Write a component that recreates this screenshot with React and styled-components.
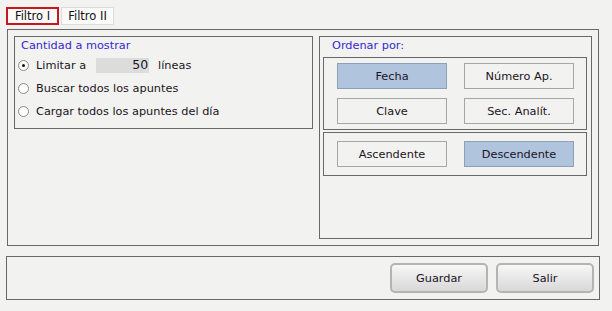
import React from 'react';
import styled, { createGlobalStyle } from 'styled-components';

const GlobalStyle = createGlobalStyle`
  html, body {
    margin: 0;
    padding: 0;
    background: #f2f2f0;
  }
  body {
    font-family: "DejaVu Sans", Verdana, sans-serif;
    font-size: 11.3px;
    color: #1b1424;
  }
`;

const Page = styled.div`
  width: 612px;
  height: 311px;
  padding: 7px 0 0 6px;
  box-sizing: border-box;
`;

const TabBar = styled.div`
  display: flex;
  gap: 2px;
  height: 18px;
`;

const Tab = styled.div`
  display: flex;
  align-items: center;
  justify-content: center;
  box-sizing: border-box;
  width: 53px;
  height: 18px;
  background: #fbfbfb;
  border: ${p => (p.active ? '2px solid #c8161d' : '1px solid #dcdcdc')};
  font-size: 11.5px;
  color: #111;
`;

const MainPanel = styled.div`
  margin: 4px 0 0 1px;
  width: 592px;
  height: 217px;
  box-sizing: border-box;
  border: 1px solid #686868;
  padding: 6px 6px 7px 6px;
  display: grid;
  grid-template-columns: 299px 273px;
  column-gap: 6px;
  align-items: start;
`;

const GroupBox = styled.div`
  box-sizing: border-box;
  border: 1px solid #686868;
  height: ${p => p.h}px;
  display: flex;
  flex-direction: column;
`;

const GroupTitle = styled.div`
  color: #3528cf;
  line-height: 14px;
  padding: ${p => p.pad};
`;

const RadioList = styled.div`
  display: flex;
  flex-direction: column;
  padding: 1px 0 0 3px;
`;

const RadioRow = styled.div`
  display: flex;
  align-items: center;
  height: 23px;
`;

const RadioDot = styled.span`
  width: 11px;
  height: 11px;
  border-radius: 50%;
  box-sizing: border-box;
  border: 1px solid #8d8d8d;
  background: radial-gradient(circle at 60% 60%, #ffffff 55%, #e3e3e3 100%);
  margin-right: 7px;
  position: relative;
  flex: none;
  &::after {
    content: '';
    display: ${p => (p.checked ? 'block' : 'none')};
    position: absolute;
    left: 3px;
    top: 3px;
    width: 3px;
    height: 3px;
    border-radius: 50%;
    background: #111;
  }
`;

const NumberInput = styled.div`
  width: 53px;
  height: 15px;
  background: #dcdcdc;
  margin: 0 9px 0 10px;
  text-align: right;
  font-size: 12.5px;
  line-height: 13px;
  padding-right: 1px;
  box-sizing: border-box;
`;

const InnerBox = styled.div`
  box-sizing: border-box;
  border: 1px solid #686868;
  margin: ${p => p.m};
  padding: ${p => p.pad};
  display: grid;
  grid-template-columns: 110px 110px;
  column-gap: 17px;
  row-gap: 9px;
`;

const ToggleButton = styled.div`
  box-sizing: border-box;
  height: 26px;
  display: flex;
  align-items: center;
  justify-content: center;
  border: 1px solid ${p => (p.selected ? '#8f9fb7' : '#a6a6a6')};
  background: ${p => (p.selected ? '#b0c4de' : '#f2f2f0')};
  color: #1b1424;
`;

const BottomPanel = styled.div`
  margin-top: 10px;
  width: 594px;
  height: 44px;
  box-sizing: border-box;
  border: 1px solid #686868;
  display: flex;
  justify-content: flex-end;
  align-items: flex-start;
  gap: 8px;
  padding: 6px 5px 0 0;
`;

const ActionButton = styled.button`
  width: 98px;
  height: 30px;
  box-sizing: border-box;
  border: 2px solid #b4b4b4;
  border-radius: 5px;
  background: linear-gradient(#f7f7f7, #d8d8d8);
  font-family: "DejaVu Sans", Verdana, sans-serif;
  font-size: 11.3px;
  color: #1b1424;
  padding: 0;
`;

const radios = [
  { label: 'Limitar a', checked: true, limit: true },
  { label: 'Buscar todos los apuntes' },
  { label: 'Cargar todos los apuntes del día' }
];

export default function App() {
  return (
    <>
      <GlobalStyle />
      <Page>
        <TabBar>
          <Tab active>Filtro I</Tab>
          <Tab>Filtro II</Tab>
        </TabBar>
        <MainPanel>
          <GroupBox h={93}>
            <GroupTitle pad="2px 0 0 6px">Cantidad a mostrar</GroupTitle>
            <RadioList>
              {radios.map(r => (
                <RadioRow key={r.label}>
                  <RadioDot checked={r.checked} />
                  {r.label}
                  {r.limit && (
                    <>
                      <NumberInput>50</NumberInput>
                      líneas
                    </>
                  )}
                </RadioRow>
              ))}
            </RadioList>
          </GroupBox>
          <GroupBox h={203}>
            <GroupTitle pad="2px 0 4px 12px">Ordenar por:</GroupTitle>
            <InnerBox m="0 4px 0 3px" pad="5px 12px 5px 13px">
              <ToggleButton selected>Fecha</ToggleButton>
              <ToggleButton>Número Ap.</ToggleButton>
              <ToggleButton>Clave</ToggleButton>
              <ToggleButton>Sec. Analít.</ToggleButton>
            </InnerBox>
            <InnerBox m="2px 4px 0 3px" pad="8px 12px 8px 13px">
              <ToggleButton>Ascendente</ToggleButton>
              <ToggleButton selected>Descendente</ToggleButton>
            </InnerBox>
          </GroupBox>
        </MainPanel>
        <BottomPanel>
          <ActionButton>Guardar</ActionButton>
          <ActionButton>Salir</ActionButton>
        </BottomPanel>
      </Page>
    </>
  );
}
